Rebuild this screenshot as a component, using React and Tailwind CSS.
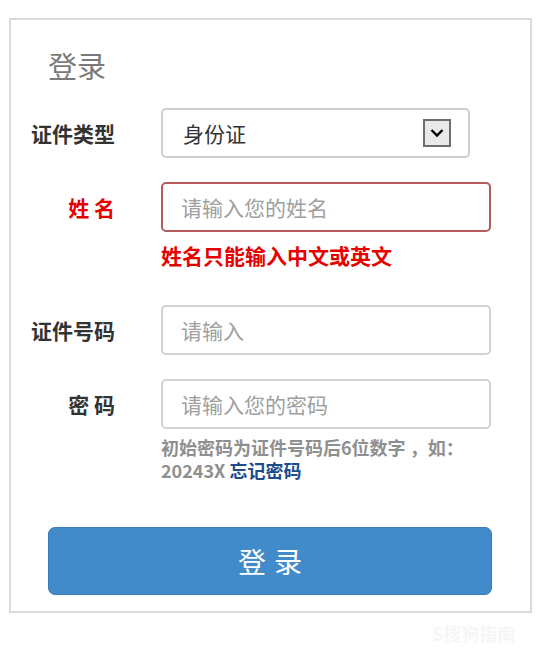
import React from "react";

const font = { fontFamily: '"Noto Sans CJK SC", "Noto Sans", sans-serif' };

function Label({ children, red }) {
  return (
    <div
      className={`w-[104px] shrink-0 text-right text-[21px] font-bold leading-none ${
        red ? "text-[#e60000]" : "text-[#333333]"
      }`}
    >
      {children}
    </div>
  );
}

export default function App() {
  return (
    <div className="w-[554px] h-[662px] bg-white relative" style={font}>
      <div className="ml-[9px] mt-[18px] w-[523px] h-[595px] border-2 border-[#dadada] pt-[31px]">
        <div className="pl-[37px] text-[29px] leading-none text-[#7a7a7a]">登录</div>

        <div className="mt-[28px] flex items-center">
          <Label>证件类型</Label>
          <div className="ml-[46px] w-[309px] h-[50px] border-2 border-[#cfcfcf] rounded-[5px] flex items-center pl-[20px] pr-[17px]">
            <span className="text-[21px] text-[#333333] leading-none flex-1">身份证</span>
            <div className="w-[28px] h-[28px] bg-[#e9e9e9] border-2 border-[#6e6e6e] flex items-center justify-center">
              <svg width="14" height="10" viewBox="0 0 14 10">
                <path d="M1.5 2 L7 7.5 L12.5 2" fill="none" stroke="#000" strokeWidth="2.4" />
              </svg>
            </div>
          </div>
        </div>

        <div className="mt-[24px] flex items-center">
          <Label red>姓 名</Label>
          <div className="ml-[46px] w-[330px] h-[50px] border-2 border-[#b65b5c] rounded-[5px] flex items-center pl-[18px]">
            <span className="text-[21px] text-[#a0a0a0] leading-none">请输入您的姓名</span>
          </div>
        </div>
        <div className="ml-[150px] mt-[13px] text-[21px] font-bold leading-none text-[#e60000]">
          姓名只能输入中文或英文
        </div>

        <div className="mt-[39px] flex items-center">
          <Label>证件号码</Label>
          <div className="ml-[46px] w-[330px] h-[50px] border-2 border-[#d2d2d2] rounded-[5px] flex items-center pl-[18px]">
            <span className="text-[21px] text-[#a0a0a0] leading-none">请输入</span>
          </div>
        </div>

        <div className="mt-[24px] flex items-center">
          <Label>密 码</Label>
          <div className="ml-[46px] w-[330px] h-[50px] border-2 border-[#d2d2d2] rounded-[5px] flex items-center pl-[18px]">
            <span className="text-[21px] text-[#a0a0a0] leading-none">请输入您的密码</span>
          </div>
        </div>

        <div className="ml-[150px] mt-[7px] text-[18px] font-bold leading-[23px] text-[#8f8f8f]">
          <div>初始密码为证件号码后6位数字 ，如：</div>
          <div>
            20243X <span className="text-[#1c4c8c]">忘记密码</span>
          </div>
        </div>

        <div className="ml-[37px] mt-[45px] w-[444px] h-[68px] bg-[#428bca] rounded-[7px] border border-[#3a7cb5] flex items-center justify-center">
          <span className="text-[28px] text-white leading-none tracking-[8px] pl-[8px]">登录</span>
        </div>
      </div>
      <div className="absolute left-[432px] top-[606px] text-[18px] font-bold text-[#f6f6f6] leading-none">
        S搜狗指南
      </div>
    </div>
  );
}
